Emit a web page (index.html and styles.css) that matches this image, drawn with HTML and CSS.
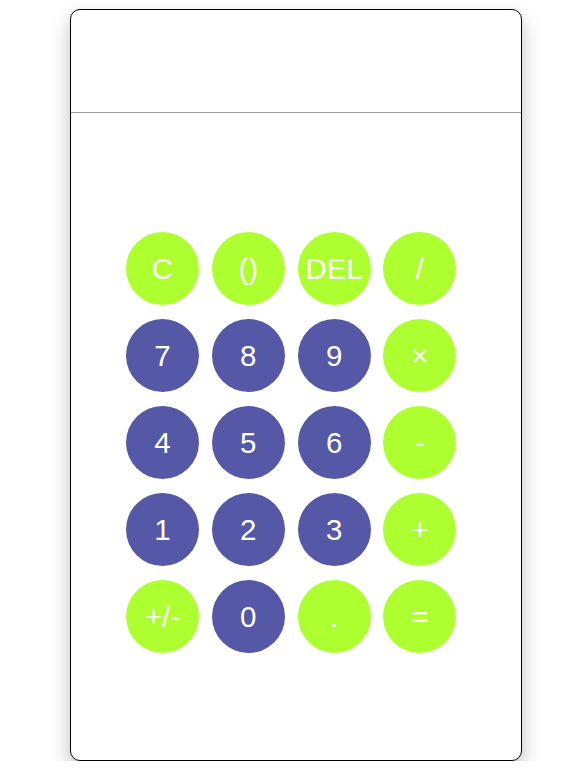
FILE: index.html
```html
<!DOCTYPE html>
<html lang="en">
<head>
<meta charset="utf-8">
<title>Calculator</title>
<link rel="stylesheet" href="styles.css">
</head>
<body>
<div class="calculator">
  <div class="display"></div>
  <div class="keypad">
    <button class="key op">C</button>
    <button class="key op">()</button>
    <button class="key op">DEL</button>
    <button class="key op">/</button>
    <button class="key num">7</button>
    <button class="key num">8</button>
    <button class="key num">9</button>
    <button class="key op">×</button>
    <button class="key num">4</button>
    <button class="key num">5</button>
    <button class="key num">6</button>
    <button class="key op">-</button>
    <button class="key num">1</button>
    <button class="key num">2</button>
    <button class="key num">3</button>
    <button class="key op">+</button>
    <button class="key op">+/-</button>
    <button class="key num">0</button>
    <button class="key op">.</button>
    <button class="key op">=</button>
  </div>
</div>
</body>
</html>
```
FILE: styles.css
```css
html, body {
  margin: 0;
  padding: 0;
  background: #fff;
}
body {
  padding-top: 9px;
  font-family: "Liberation Sans", Arial, sans-serif;
}
.calculator {
  box-sizing: border-box;
  width: 452px;
  height: 752px;
  margin-left: 70px;
  border: 1px solid #000;
  border-radius: 10px;
  background: #fff;
  box-shadow: 0 10px 20px rgba(0, 0, 0, 0.25);
  overflow: hidden;
}
.display {
  height: 102px;
  border-bottom: 1px solid #9a9a9a;
}
.keypad {
  display: grid;
  grid-template-columns: repeat(4, 73px);
  grid-auto-rows: 73px;
  column-gap: 12.8px;
  row-gap: 14px;
  padding: 119px 0 0 55px;
}
.key {
  width: 73px;
  height: 73px;
  border: none;
  border-radius: 50%;
  padding: 0;
  margin: 0;
  color: #fff;
  font-family: "Liberation Sans", Arial, sans-serif;
  font-size: 29.5px;
  line-height: 1;
  display: flex;
  align-items: center;
  justify-content: center;
}
.op {
  background: #adff2f;
}
.num {
  background: #5458a7;
}
```
